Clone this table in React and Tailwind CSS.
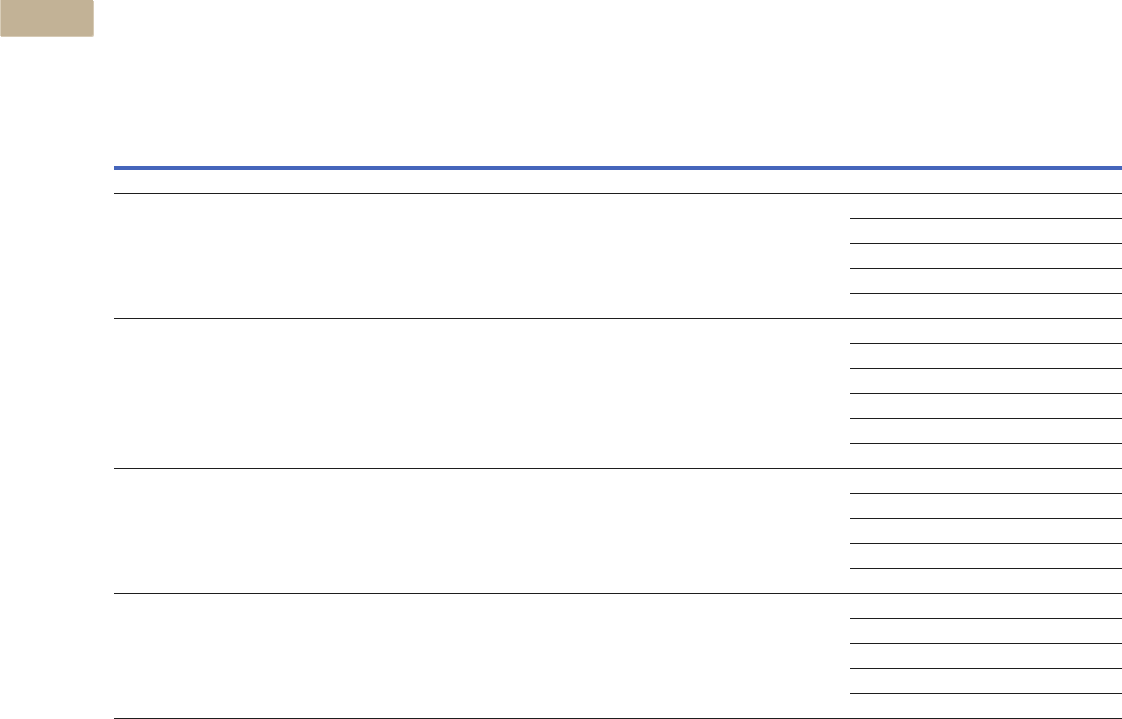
import React from "react";

const groups = [5, 6, 5, 5];

function Group({ rows }) {
  return (
    <div className="flex border-b border-[#1e1e1e]">
      <div className="w-[736px]" />
      <div className="flex-1">
        {Array.from({ length: rows }).map((_, i) =>
          i < rows - 1 ? (
            <div key={i} className="h-[25px] border-b border-[#1e1e1e]" />
          ) : (
            <div key={i} className="h-[24px]" />
          )
        )}
      </div>
    </div>
  );
}

export default function App() {
  return (
    <div className="min-h-screen bg-white font-['Liberation_Sans',sans-serif]">
      {/* tab */}
      <div className="w-[93px] h-[36px] bg-[#c2b296] border-l border-[#d9ceb9] rounded-br-[2px] shadow-[1px_1px_0_#d6cab5]" />

      {/* table */}
      <div className="ml-[114px] mt-[130px] w-[1008px]">
        <div className="h-[28px] border-t-4 border-b border-t-[#4565bb] border-b-[#1e1e1e]" />
        {groups.map((n, i) => (
          <Group key={i} rows={n} />
        ))}
      </div>
    </div>
  );
}
